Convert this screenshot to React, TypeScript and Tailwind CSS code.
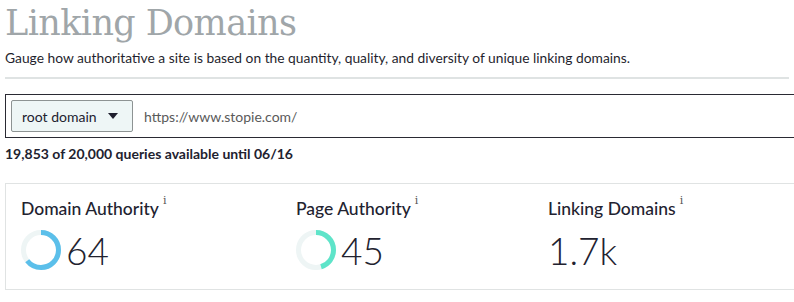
import React from "react";

function Gauge({ value, color }: { value: number; color: string }) {
  const r = 17.5;
  const c = 2 * Math.PI * r;
  return (
    <svg width="40" height="40" viewBox="0 0 40 40" className="shrink-0">
      <circle cx="20" cy="20" r={r} fill="none" stroke="#eef5f5" strokeWidth="5" />
      <circle
        cx="20"
        cy="20"
        r={r}
        fill="none"
        stroke={color}
        strokeWidth="5"
        strokeDasharray={`${(c * value) / 100} ${c}`}
        transform="rotate(-90 20 20)"
      />
    </svg>
  );
}

function Metric({
  label,
  value,
  gauge,
  color,
  width,
}: {
  label: string;
  value: string;
  gauge?: number;
  color?: string;
  width: string;
}) {
  return (
    <div className={width}>
      <div className="flex items-start text-[17.5px] font-medium leading-[24px] text-[#22222f]">
        <span>{label}</span>
        <span className="ml-[4px] mt-[-4px] text-[11px] leading-[16px] font-normal text-[#555] font-['DejaVu_Serif',serif]">i</span>
      </div>
      <div className="mt-[9px] flex items-center gap-[5px] h-[40px]">
        {gauge !== undefined && color && <Gauge value={gauge} color={color} />}
        <span className="text-[37px] font-light leading-none text-[#22222f]">{value}</span>
      </div>
    </div>
  );
}

export default function App() {
  return (
    <div className="w-[794px] h-[302px] overflow-hidden bg-white px-[5px] font-['Lato',sans-serif]">
      <h1 className="pt-[3px] text-[35px] leading-[40px] text-[#a0a6a9] font-['DejaVu_Serif',serif] font-light tracking-[-0.6px]">
        Linking Domains
      </h1>
      <p className="mt-[6px] text-[13.8px] leading-[18px] text-[#1f1f2e]">
        Gauge how authoritative a site is based on the quantity, quality, and diversity of unique linking domains.
      </p>
      <div className="mt-[10px] h-[2px] w-full bg-[#dfe3e3]" />
      <div className="mt-[15px] flex h-[44px] w-[800px] items-center border border-[#2a2a33] px-[5px]">
        <div className="flex h-[32px] w-[122px] items-center rounded-[2px] border border-[#8d9393] bg-[#eef6f6] pl-[10px] text-[14px] text-[#22222f]">
          <span>root domain</span>
          <svg width="10" height="6" viewBox="0 0 10 6" className="ml-[11px]">
            <path d="M0 0 L10 0 L5 6 Z" fill="#1f1f2e" />
          </svg>
        </div>
        <span className="ml-[11px] text-[14px] text-[#5a5a5a]">https://www.stopie.com/</span>
      </div>
      <div className="mt-[7px] text-[14px] font-bold leading-[18px] text-[#22222f]">
        19,853 of 20,000 queries available until 06/16
      </div>
      <div className="mt-[20px] flex h-[107px] w-[800px] border border-[#e0e3e3] px-[15px] pt-[13px]">
        <Metric label="Domain Authority" value="64" gauge={64} color="#5bbfea" width="w-[275px]" />
        <Metric label="Page Authority" value="45" gauge={45} color="#5ee4c9" width="w-[252px]" />
        <Metric label="Linking Domains" value="1.7k" width="flex-1" />
      </div>
    </div>
  );
}
